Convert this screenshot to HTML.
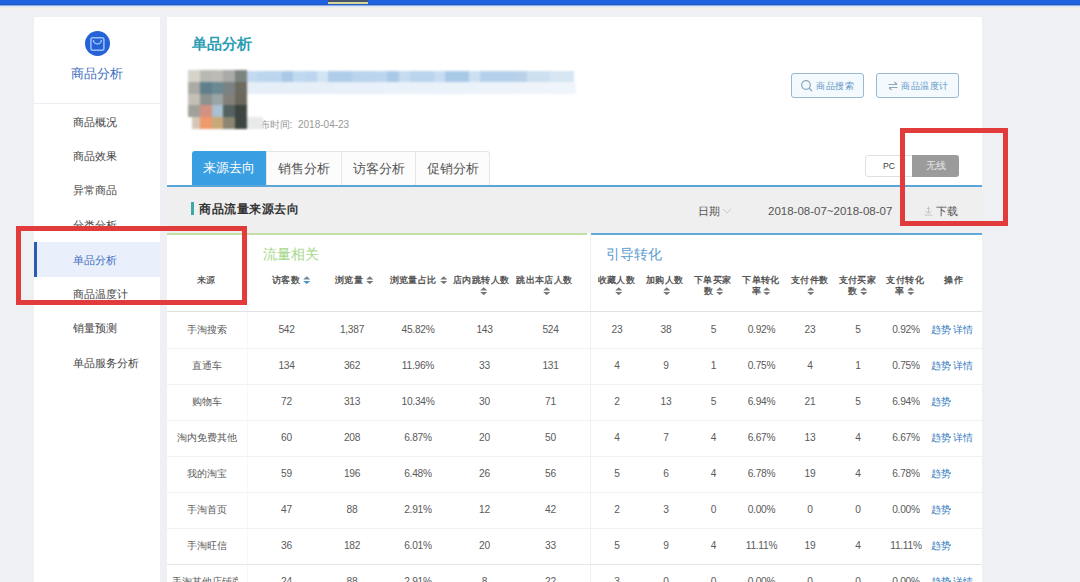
<!DOCTYPE html>
<html><head><meta charset="utf-8">
<style>
*{margin:0;padding:0;box-sizing:border-box}
html,body{width:1080px;height:582px;overflow:hidden;background:#eef0f4;font-family:"Liberation Sans",sans-serif;color:#333;position:relative}
.a{position:absolute;white-space:nowrap}
.sitem{left:73px;font-size:11px;line-height:16px}
.hd{font-size:9px;letter-spacing:0.4px;line-height:13px;color:#4a4a4a;-webkit-text-stroke:0.3px #4a4a4a}
.td{font-size:10px;line-height:13px;color:#5a5a5a}
.num{font-size:10.2px;letter-spacing:-0.25px;line-height:13px;color:#5a5a5a}
</style></head>
<body>
<div class="a" style="left:0;top:0;width:1080px;height:4px;background:#1e62df"></div>
<div class="a" style="left:0;top:4px;width:1080px;height:1px;background:#2359c6"></div>
<div class="a" style="left:0;top:5px;width:1080px;height:1px;background:#8eabe2"></div>
<div class="a" style="left:0;top:6px;width:1080px;height:1px;background:#dde8f8"></div>
<div class="a" style="left:0;top:7px;width:1080px;height:1px;background:#e8ecf0"></div>
<div class="a" style="left:0;top:8px;width:1080px;height:2px;background:#f4f0ec"></div>
<div class="a" style="left:328px;top:0;width:40px;height:2px;background:#46546e"></div>
<div class="a" style="left:328px;top:2px;width:40px;height:2px;background:#d8d694"></div>
<div class="a" style="left:34px;top:17px;width:126px;height:565px;background:#fff"></div>
<div class="a" style="left:167px;top:17px;width:815px;height:565px;background:#fff"></div>
<div class="a" style="left:85px;top:31px;width:25px;height:25px;border-radius:50%;background:#2462d5"></div>
<svg class="a" style="left:85px;top:31px" width="25" height="25" viewBox="0 0 25 25"><rect x="5.9" y="6.7" width="13" height="12.6" rx="2" fill="none" stroke="#9cc0fa" stroke-width="1.5"/><path d="M8.4 9 A4 4 0 0 0 16.4 9" fill="none" stroke="#9cc0fa" stroke-width="1.5"/></svg>
<div class="a" style="left:34px;top:66px;width:126px;text-align:center;font-size:13px;line-height:16px;color:#3d6ec2">商品分析</div>
<div class="a" style="left:34px;top:103px;width:126px;height:1px;background:#eceef3"></div>
<div class="a" style="left:34px;top:242px;width:126px;height:35px;background:#e9f0fb"></div>
<div class="a" style="left:34px;top:242px;width:3px;height:35px;background:#2a5bb5"></div>
<div class="a sitem" style="top:114px;color:#444">商品概况</div>
<div class="a sitem" style="top:148px;color:#444">商品效果</div>
<div class="a sitem" style="top:182px;color:#444">异常商品</div>
<div class="a sitem" style="top:217px;color:#444">分类分析</div>
<div class="a sitem" style="top:252px;color:#3d6ec2">单品分析</div>
<div class="a sitem" style="top:286px;color:#444">商品温度计</div>
<div class="a sitem" style="top:320px;color:#444">销量预测</div>
<div class="a sitem" style="top:355px;color:#444">单品服务分析</div>
<div class="a" style="left:191.5px;top:35px;font-size:15px;line-height:17px;font-weight:bold;color:#2b9db4">单品分析</div>
<div class="a" style="left:260px;top:119px;font-size:10px;line-height:12px;color:#999">布时间</div>
<div class="a" style="left:289.5px;top:119px;font-size:10px;line-height:12px;color:#999">:</div>
<div class="a" style="left:298px;top:119px;font-size:10px;line-height:12px;color:#999">2018-04-23</div>
<div class="a" style="left:0;top:0;width:1080px;height:140px;filter:blur(0.8px)">
<div class="a" style="left:188.30px;top:70.30px;width:12.08px;height:12.08px;background:#d6d3cb"></div>
<div class="a" style="left:199.98px;top:70.30px;width:12.08px;height:12.08px;background:#b9b9b3"></div>
<div class="a" style="left:211.66px;top:70.30px;width:12.08px;height:12.08px;background:#bdbbb5"></div>
<div class="a" style="left:223.34px;top:70.30px;width:12.08px;height:12.08px;background:#a9aba7"></div>
<div class="a" style="left:235.02px;top:70.30px;width:12.08px;height:12.08px;background:#7d837f"></div>
<div class="a" style="left:188.30px;top:81.98px;width:12.08px;height:12.08px;background:#abaaa4"></div>
<div class="a" style="left:199.98px;top:81.98px;width:12.08px;height:12.08px;background:#607e8b"></div>
<div class="a" style="left:211.66px;top:81.98px;width:12.08px;height:12.08px;background:#6b8995"></div>
<div class="a" style="left:223.34px;top:81.98px;width:12.08px;height:12.08px;background:#7b8284"></div>
<div class="a" style="left:235.02px;top:81.98px;width:12.08px;height:12.08px;background:#6d6a5f"></div>
<div class="a" style="left:188.30px;top:93.66px;width:12.08px;height:12.08px;background:#c4c0b6"></div>
<div class="a" style="left:199.98px;top:93.66px;width:12.08px;height:12.08px;background:#8b9391"></div>
<div class="a" style="left:211.66px;top:93.66px;width:12.08px;height:12.08px;background:#9ba5a5"></div>
<div class="a" style="left:223.34px;top:93.66px;width:12.08px;height:12.08px;background:#838079"></div>
<div class="a" style="left:235.02px;top:93.66px;width:12.08px;height:12.08px;background:#6b675b"></div>
<div class="a" style="left:188.30px;top:105.34px;width:12.08px;height:12.08px;background:#a1a19b"></div>
<div class="a" style="left:199.98px;top:105.34px;width:12.08px;height:12.08px;background:#d39182"></div>
<div class="a" style="left:211.66px;top:105.34px;width:12.08px;height:12.08px;background:#a9c1d1"></div>
<div class="a" style="left:223.34px;top:105.34px;width:12.08px;height:12.08px;background:#536161"></div>
<div class="a" style="left:235.02px;top:105.34px;width:12.08px;height:12.08px;background:#3d4541"></div>
<div class="a" style="left:188.30px;top:117.02px;width:12.08px;height:12.08px;background:#d4c6b4"></div>
<div class="a" style="left:199.98px;top:117.02px;width:12.08px;height:12.08px;background:#ef9a6b"></div>
<div class="a" style="left:211.66px;top:117.02px;width:12.08px;height:12.08px;background:#c9a97a"></div>
<div class="a" style="left:223.34px;top:117.02px;width:12.08px;height:12.08px;background:#8b8571"></div>
<div class="a" style="left:235.02px;top:117.02px;width:12.08px;height:12.08px;background:#3d4541"></div>
<div class="a" style="left:188px;top:117px;width:4px;height:12px;background:#fff"></div>
<div class="a" style="left:246.70px;top:70.5px;width:12.08px;height:11.6px;background:#c2d9ef"></div>
<div class="a" style="left:258.38px;top:70.5px;width:12.08px;height:11.6px;background:#bcd6ee"></div>
<div class="a" style="left:270.06px;top:70.5px;width:12.08px;height:11.6px;background:#bcd6ee"></div>
<div class="a" style="left:281.74px;top:70.5px;width:12.08px;height:11.6px;background:#a9c9e7"></div>
<div class="a" style="left:293.42px;top:70.5px;width:12.08px;height:11.6px;background:#c1d9f0"></div>
<div class="a" style="left:305.10px;top:70.5px;width:12.08px;height:11.6px;background:#bdd5ee"></div>
<div class="a" style="left:316.78px;top:70.5px;width:12.08px;height:11.6px;background:#d1e4f4"></div>
<div class="a" style="left:328.46px;top:70.5px;width:12.08px;height:11.6px;background:#afcce8"></div>
<div class="a" style="left:340.14px;top:70.5px;width:12.08px;height:11.6px;background:#afcce8"></div>
<div class="a" style="left:351.82px;top:70.5px;width:12.08px;height:11.6px;background:#b9d4ec"></div>
<div class="a" style="left:363.50px;top:70.5px;width:12.08px;height:11.6px;background:#b9d4ec"></div>
<div class="a" style="left:375.18px;top:70.5px;width:12.08px;height:11.6px;background:#bdd6ee"></div>
<div class="a" style="left:386.86px;top:70.5px;width:12.08px;height:11.6px;background:#a9c9e7"></div>
<div class="a" style="left:398.54px;top:70.5px;width:12.08px;height:11.6px;background:#c8dcf0"></div>
<div class="a" style="left:410.22px;top:70.5px;width:12.08px;height:11.6px;background:#b9d4ec"></div>
<div class="a" style="left:421.90px;top:70.5px;width:12.08px;height:11.6px;background:#b9d4ec"></div>
<div class="a" style="left:433.58px;top:70.5px;width:12.08px;height:11.6px;background:#c8dcf2"></div>
<div class="a" style="left:445.26px;top:70.5px;width:12.08px;height:11.6px;background:#a9c9e8"></div>
<div class="a" style="left:456.94px;top:70.5px;width:12.08px;height:11.6px;background:#a9c9e8"></div>
<div class="a" style="left:468.62px;top:70.5px;width:12.08px;height:11.6px;background:#cde0f2"></div>
<div class="a" style="left:480.30px;top:70.5px;width:12.08px;height:11.6px;background:#b5d0ea"></div>
<div class="a" style="left:491.98px;top:70.5px;width:12.08px;height:11.6px;background:#b5d0ea"></div>
<div class="a" style="left:503.66px;top:70.5px;width:12.08px;height:11.6px;background:#b5d0ea"></div>
<div class="a" style="left:515.34px;top:70.5px;width:12.08px;height:11.6px;background:#b9d2ea"></div>
<div class="a" style="left:527.02px;top:70.5px;width:12.08px;height:11.6px;background:#cde0f0"></div>
<div class="a" style="left:538.70px;top:70.5px;width:12.08px;height:11.6px;background:#cde0f0"></div>
<div class="a" style="left:550.38px;top:70.5px;width:12.08px;height:11.6px;background:#d6e6f3"></div>
<div class="a" style="left:562.06px;top:70.5px;width:12.08px;height:11.6px;background:#d6e6f3"></div>
<div class="a" style="left:246.7px;top:82px;width:329px;height:11.5px;background:linear-gradient(90deg,#e6eef8,#ebf2fa 60%,#f1f5fb)"></div>
<div class="a" style="left:246.7px;top:117px;width:16px;height:11.5px;background:#e9e9e9"></div>
</div>
<div class="a" style="left:791px;top:73px;width:73px;height:25px;border:1px solid #97b9d3;border-radius:3px;background:#f3f9fd"></div>
<svg class="a" style="left:800px;top:79px" width="14" height="14" viewBox="0 0 14 14"><circle cx="6" cy="6" r="4.3" fill="none" stroke="#8aa6bd" stroke-width="1.2"/><path d="M9.2 9.2 L12 12" stroke="#8aa6bd" stroke-width="1.4"/></svg>
<div class="a" style="left:816px;top:80px;font-size:9px;letter-spacing:0.5px;line-height:12px;color:#6096c8">商品搜索</div>
<div class="a" style="left:876px;top:73px;width:83px;height:25px;border:1px solid #97b9d3;border-radius:3px;background:#f3f9fd"></div>
<svg class="a" style="left:887px;top:80px" width="12" height="12" viewBox="0 0 12 12"><path d="M1.5 4.5 H10 M7.5 2 L10 4.5" fill="none" stroke="#8aa6bd" stroke-width="1.1"/><path d="M10.5 7.5 H2 M4.5 10 L2 7.5" fill="none" stroke="#8aa6bd" stroke-width="1.1"/></svg>
<div class="a" style="left:901px;top:80px;font-size:9px;letter-spacing:0.5px;line-height:12px;color:#6096c8">商品温度计</div>
<div class="a" style="left:192px;top:151px;width:74px;height:34px;background:#3a9ee2;border-radius:3px 0 0 0;color:#fff;font-size:13px;line-height:34px;text-align:center">来源去向</div>
<div class="a" style="left:266px;top:151px;width:76px;height:34px;background:#fcfcfc;border:1px solid #e6e6e6;border-bottom:none;border-radius:0;color:#555;font-size:13px;line-height:33px;text-align:center">销售分析</div>
<div class="a" style="left:341px;top:151px;width:75px;height:34px;background:#fcfcfc;border:1px solid #e6e6e6;border-bottom:none;border-radius:0;color:#555;font-size:13px;line-height:33px;text-align:center">访客分析</div>
<div class="a" style="left:415px;top:151px;width:75px;height:34px;background:#fcfcfc;border:1px solid #e6e6e6;border-bottom:none;border-radius:0 3px 0 0;color:#555;font-size:13px;line-height:33px;text-align:center">促销分析</div>
<div class="a" style="left:865px;top:155px;width:48px;height:22px;border:1px solid #e0e0e0;border-radius:3px 0 0 3px;background:#fff;font-size:8.7px;line-height:20px;text-align:center;color:#444">PC</div>
<div class="a" style="left:912px;top:155px;width:47px;height:22px;border-radius:0 3px 3px 0;background:#9b9b9b;font-size:10px;line-height:22px;text-align:center;color:#e8e8e8">无线</div>
<div class="a" style="left:167px;top:185px;width:815px;height:2px;background:#5ba6d8"></div>
<div class="a" style="left:167px;top:187px;width:815px;height:46px;background:#efefef"></div>
<div class="a" style="left:191px;top:202px;width:3px;height:13px;background:#3ba9aa"></div>
<div class="a" style="left:199px;top:201px;font-size:12px;letter-spacing:0.55px;line-height:16px;font-weight:bold;color:#333">商品流量来源去向</div>
<div class="a" style="left:698px;top:204px;font-size:11px;line-height:14px;color:#555">日期</div>
<svg class="a" style="left:722px;top:207px" width="10" height="8" viewBox="0 0 10 8"><path d="M1 2 L5 6 L9 2" fill="none" stroke="#c8c8c8" stroke-width="1"/></svg>
<div class="a" style="left:768px;top:204px;font-size:11.5px;line-height:14px;color:#555">2018-08-07~2018-08-07</div>
<svg class="a" style="left:923px;top:205px" width="11" height="11" viewBox="0 0 11 11"><path d="M5.5 1.5 V8 M2.5 6 Q5.5 9.5 8.5 6 M1.5 10 H9.5 M4 3.5 H7" fill="none" stroke="#c4c4c4" stroke-width="1"/></svg>
<div class="a" style="left:936px;top:204px;font-size:11px;line-height:14px;color:#555">下载</div>
<div class="a" style="left:167px;top:233px;width:420px;height:1.5px;background:#c2e0a6"></div>
<div class="a" style="left:591px;top:233px;width:391px;height:2px;background:#62a8d8"></div>
<div class="a" style="left:263px;top:246px;font-size:14px;line-height:17px;color:#a6d88a">流量相关</div>
<div class="a" style="left:606px;top:246px;font-size:14px;line-height:17px;color:#5a9dd0">引导转化</div>
<div class="a" style="left:247px;top:235px;width:1px;height:347px;background:#f8f8f8"></div>
<div class="a" style="left:590px;top:235px;width:1px;height:347px;background:#f0f0f0"></div>
<div class="a" style="left:196.5px;top:273.5px;font-size:9px;line-height:13px;letter-spacing:0.4px;color:#444;-webkit-text-stroke:0.15px #444">来源</div>
<div class="a hd" style="left:272.1px;top:273.5px">访客数</div>
<div class="a hd" style="left:335.1px;top:273.5px">浏览量</div>
<div class="a hd" style="left:389.6px;top:273.5px">浏览量占比</div>
<div class="a hd" style="left:453.1px;top:273.5px">店内跳转人数</div>
<div class="a hd" style="left:516.3px;top:273.5px">跳出本店人数</div>
<div class="a hd" style="left:597.7px;top:273.5px">收藏人数</div>
<div class="a hd" style="left:645.9px;top:273.5px">加购人数</div>
<div class="a hd" style="left:694.0px;top:273.5px">下单买家</div>
<div class="a hd" style="left:742.2px;top:273.5px">下单转化</div>
<div class="a hd" style="left:791.1px;top:273.5px">支付件数</div>
<div class="a hd" style="left:838.7px;top:273.5px">支付买家</div>
<div class="a hd" style="left:886.4px;top:273.5px">支付转化</div>
<div class="a hd" style="left:944.4px;top:273.5px">操作</div>
<div class="a hd" style="left:703.8px;top:284.5px">数</div>
<div class="a hd" style="left:751.6px;top:284.5px">率</div>
<div class="a hd" style="left:848.3px;top:284.5px">数</div>
<div class="a hd" style="left:895.0px;top:284.5px">率</div>
<svg class="a" style="left:303.05px;top:275.75px" width="7.5" height="8.5" viewBox="0 0 7.5 8.5"><path d="M3.75 0.3 L7.3 3.6 L0.2 3.6Z" fill="#6a8a9c"/><path d="M3.75 8.2 L7.3 4.9 L0.2 4.9Z" fill="#4a98c4"/></svg>
<svg class="a" style="left:366.25px;top:275.75px" width="7.5" height="8.5" viewBox="0 0 7.5 8.5"><path d="M3.75 0.3 L7.3 3.6 L0.2 3.6Z" fill="#777"/><path d="M3.75 8.2 L7.3 4.9 L0.2 4.9Z" fill="#777"/></svg>
<svg class="a" style="left:439.75px;top:275.75px" width="7.5" height="8.5" viewBox="0 0 7.5 8.5"><path d="M3.75 0.3 L7.3 3.6 L0.2 3.6Z" fill="#777"/><path d="M3.75 8.2 L7.3 4.9 L0.2 4.9Z" fill="#777"/></svg>
<svg class="a" style="left:479.75px;top:286.75px" width="7.5" height="8.5" viewBox="0 0 7.5 8.5"><path d="M3.75 0.3 L7.3 3.6 L0.2 3.6Z" fill="#777"/><path d="M3.75 8.2 L7.3 4.9 L0.2 4.9Z" fill="#777"/></svg>
<svg class="a" style="left:542.85px;top:286.75px" width="7.5" height="8.5" viewBox="0 0 7.5 8.5"><path d="M3.75 0.3 L7.3 3.6 L0.2 3.6Z" fill="#777"/><path d="M3.75 8.2 L7.3 4.9 L0.2 4.9Z" fill="#777"/></svg>
<svg class="a" style="left:614.95px;top:286.75px" width="7.5" height="8.5" viewBox="0 0 7.5 8.5"><path d="M3.75 0.3 L7.3 3.6 L0.2 3.6Z" fill="#777"/><path d="M3.75 8.2 L7.3 4.9 L0.2 4.9Z" fill="#777"/></svg>
<svg class="a" style="left:663.15px;top:286.75px" width="7.5" height="8.5" viewBox="0 0 7.5 8.5"><path d="M3.75 0.3 L7.3 3.6 L0.2 3.6Z" fill="#777"/><path d="M3.75 8.2 L7.3 4.9 L0.2 4.9Z" fill="#777"/></svg>
<svg class="a" style="left:715.55px;top:286.75px" width="7.5" height="8.5" viewBox="0 0 7.5 8.5"><path d="M3.75 0.3 L7.3 3.6 L0.2 3.6Z" fill="#777"/><path d="M3.75 8.2 L7.3 4.9 L0.2 4.9Z" fill="#777"/></svg>
<svg class="a" style="left:762.95px;top:286.75px" width="7.5" height="8.5" viewBox="0 0 7.5 8.5"><path d="M3.75 0.3 L7.3 3.6 L0.2 3.6Z" fill="#777"/><path d="M3.75 8.2 L7.3 4.9 L0.2 4.9Z" fill="#777"/></svg>
<svg class="a" style="left:807.25px;top:286.75px" width="7.5" height="8.5" viewBox="0 0 7.5 8.5"><path d="M3.75 0.3 L7.3 3.6 L0.2 3.6Z" fill="#777"/><path d="M3.75 8.2 L7.3 4.9 L0.2 4.9Z" fill="#777"/></svg>
<svg class="a" style="left:860.05px;top:286.75px" width="7.5" height="8.5" viewBox="0 0 7.5 8.5"><path d="M3.75 0.3 L7.3 3.6 L0.2 3.6Z" fill="#777"/><path d="M3.75 8.2 L7.3 4.9 L0.2 4.9Z" fill="#777"/></svg>
<svg class="a" style="left:907.25px;top:286.75px" width="7.5" height="8.5" viewBox="0 0 7.5 8.5"><path d="M3.75 0.3 L7.3 3.6 L0.2 3.6Z" fill="#777"/><path d="M3.75 8.2 L7.3 4.9 L0.2 4.9Z" fill="#777"/></svg>
<div class="a" style="left:167px;top:311px;width:815px;height:1px;background:#e2e2e2"></div>
<div class="a" style="left:167px;top:348px;width:815px;height:1px;background:#f1f1f1"></div>
<div class="a td" style="left:166.5px;top:323.2px;width:80px;text-align:center">手淘搜索</div>
<div class="a num" style="left:256.5px;top:323.2px;width:60px;text-align:center">542</div>
<div class="a num" style="left:322px;top:323.2px;width:60px;text-align:center">1,387</div>
<div class="a num" style="left:388px;top:323.2px;width:60px;text-align:center">45.82%</div>
<div class="a num" style="left:454.5px;top:323.2px;width:60px;text-align:center">143</div>
<div class="a num" style="left:520.5px;top:323.2px;width:60px;text-align:center">524</div>
<div class="a num" style="left:587px;top:323.2px;width:60px;text-align:center">23</div>
<div class="a num" style="left:636px;top:323.2px;width:60px;text-align:center">38</div>
<div class="a num" style="left:683.5px;top:323.2px;width:60px;text-align:center">5</div>
<div class="a num" style="left:731.5px;top:323.2px;width:60px;text-align:center">0.92%</div>
<div class="a num" style="left:780px;top:323.2px;width:60px;text-align:center">23</div>
<div class="a num" style="left:828px;top:323.2px;width:60px;text-align:center">5</div>
<div class="a num" style="left:876px;top:323.2px;width:60px;text-align:center">0.92%</div>
<div class="a td" style="left:930.5px;top:322.7px;color:#3278be">趋势<span style="display:inline-block;width:2px"></span>详情</div>
<div class="a" style="left:167px;top:384px;width:815px;height:1px;background:#f1f1f1"></div>
<div class="a td" style="left:166.5px;top:359.2px;width:80px;text-align:center">直通车</div>
<div class="a num" style="left:256.5px;top:359.2px;width:60px;text-align:center">134</div>
<div class="a num" style="left:322px;top:359.2px;width:60px;text-align:center">362</div>
<div class="a num" style="left:388px;top:359.2px;width:60px;text-align:center">11.96%</div>
<div class="a num" style="left:454.5px;top:359.2px;width:60px;text-align:center">33</div>
<div class="a num" style="left:520.5px;top:359.2px;width:60px;text-align:center">131</div>
<div class="a num" style="left:587px;top:359.2px;width:60px;text-align:center">4</div>
<div class="a num" style="left:636px;top:359.2px;width:60px;text-align:center">9</div>
<div class="a num" style="left:683.5px;top:359.2px;width:60px;text-align:center">1</div>
<div class="a num" style="left:731.5px;top:359.2px;width:60px;text-align:center">0.75%</div>
<div class="a num" style="left:780px;top:359.2px;width:60px;text-align:center">4</div>
<div class="a num" style="left:828px;top:359.2px;width:60px;text-align:center">1</div>
<div class="a num" style="left:876px;top:359.2px;width:60px;text-align:center">0.75%</div>
<div class="a td" style="left:930.5px;top:358.7px;color:#3278be">趋势<span style="display:inline-block;width:2px"></span>详情</div>
<div class="a" style="left:167px;top:420px;width:815px;height:1px;background:#f1f1f1"></div>
<div class="a td" style="left:166.5px;top:395.2px;width:80px;text-align:center">购物车</div>
<div class="a num" style="left:256.5px;top:395.2px;width:60px;text-align:center">72</div>
<div class="a num" style="left:322px;top:395.2px;width:60px;text-align:center">313</div>
<div class="a num" style="left:388px;top:395.2px;width:60px;text-align:center">10.34%</div>
<div class="a num" style="left:454.5px;top:395.2px;width:60px;text-align:center">30</div>
<div class="a num" style="left:520.5px;top:395.2px;width:60px;text-align:center">71</div>
<div class="a num" style="left:587px;top:395.2px;width:60px;text-align:center">2</div>
<div class="a num" style="left:636px;top:395.2px;width:60px;text-align:center">13</div>
<div class="a num" style="left:683.5px;top:395.2px;width:60px;text-align:center">5</div>
<div class="a num" style="left:731.5px;top:395.2px;width:60px;text-align:center">6.94%</div>
<div class="a num" style="left:780px;top:395.2px;width:60px;text-align:center">21</div>
<div class="a num" style="left:828px;top:395.2px;width:60px;text-align:center">5</div>
<div class="a num" style="left:876px;top:395.2px;width:60px;text-align:center">6.94%</div>
<div class="a td" style="left:930.5px;top:394.7px;color:#3278be">趋势</div>
<div class="a" style="left:167px;top:456px;width:815px;height:1px;background:#f1f1f1"></div>
<div class="a td" style="left:166.5px;top:431.2px;width:80px;text-align:center">淘内免费其他</div>
<div class="a num" style="left:256.5px;top:431.2px;width:60px;text-align:center">60</div>
<div class="a num" style="left:322px;top:431.2px;width:60px;text-align:center">208</div>
<div class="a num" style="left:388px;top:431.2px;width:60px;text-align:center">6.87%</div>
<div class="a num" style="left:454.5px;top:431.2px;width:60px;text-align:center">20</div>
<div class="a num" style="left:520.5px;top:431.2px;width:60px;text-align:center">50</div>
<div class="a num" style="left:587px;top:431.2px;width:60px;text-align:center">4</div>
<div class="a num" style="left:636px;top:431.2px;width:60px;text-align:center">7</div>
<div class="a num" style="left:683.5px;top:431.2px;width:60px;text-align:center">4</div>
<div class="a num" style="left:731.5px;top:431.2px;width:60px;text-align:center">6.67%</div>
<div class="a num" style="left:780px;top:431.2px;width:60px;text-align:center">13</div>
<div class="a num" style="left:828px;top:431.2px;width:60px;text-align:center">4</div>
<div class="a num" style="left:876px;top:431.2px;width:60px;text-align:center">6.67%</div>
<div class="a td" style="left:930.5px;top:430.7px;color:#3278be">趋势<span style="display:inline-block;width:2px"></span>详情</div>
<div class="a" style="left:167px;top:492px;width:815px;height:1px;background:#f1f1f1"></div>
<div class="a td" style="left:166.5px;top:467.2px;width:80px;text-align:center">我的淘宝</div>
<div class="a num" style="left:256.5px;top:467.2px;width:60px;text-align:center">59</div>
<div class="a num" style="left:322px;top:467.2px;width:60px;text-align:center">196</div>
<div class="a num" style="left:388px;top:467.2px;width:60px;text-align:center">6.48%</div>
<div class="a num" style="left:454.5px;top:467.2px;width:60px;text-align:center">26</div>
<div class="a num" style="left:520.5px;top:467.2px;width:60px;text-align:center">56</div>
<div class="a num" style="left:587px;top:467.2px;width:60px;text-align:center">5</div>
<div class="a num" style="left:636px;top:467.2px;width:60px;text-align:center">6</div>
<div class="a num" style="left:683.5px;top:467.2px;width:60px;text-align:center">4</div>
<div class="a num" style="left:731.5px;top:467.2px;width:60px;text-align:center">6.78%</div>
<div class="a num" style="left:780px;top:467.2px;width:60px;text-align:center">19</div>
<div class="a num" style="left:828px;top:467.2px;width:60px;text-align:center">4</div>
<div class="a num" style="left:876px;top:467.2px;width:60px;text-align:center">6.78%</div>
<div class="a td" style="left:930.5px;top:466.7px;color:#3278be">趋势</div>
<div class="a" style="left:167px;top:528px;width:815px;height:1px;background:#f1f1f1"></div>
<div class="a td" style="left:166.5px;top:503.2px;width:80px;text-align:center">手淘首页</div>
<div class="a num" style="left:256.5px;top:503.2px;width:60px;text-align:center">47</div>
<div class="a num" style="left:322px;top:503.2px;width:60px;text-align:center">88</div>
<div class="a num" style="left:388px;top:503.2px;width:60px;text-align:center">2.91%</div>
<div class="a num" style="left:454.5px;top:503.2px;width:60px;text-align:center">12</div>
<div class="a num" style="left:520.5px;top:503.2px;width:60px;text-align:center">42</div>
<div class="a num" style="left:587px;top:503.2px;width:60px;text-align:center">2</div>
<div class="a num" style="left:636px;top:503.2px;width:60px;text-align:center">3</div>
<div class="a num" style="left:683.5px;top:503.2px;width:60px;text-align:center">0</div>
<div class="a num" style="left:731.5px;top:503.2px;width:60px;text-align:center">0.00%</div>
<div class="a num" style="left:780px;top:503.2px;width:60px;text-align:center">0</div>
<div class="a num" style="left:828px;top:503.2px;width:60px;text-align:center">0</div>
<div class="a num" style="left:876px;top:503.2px;width:60px;text-align:center">0.00%</div>
<div class="a td" style="left:930.5px;top:502.7px;color:#3278be">趋势</div>
<div class="a" style="left:167px;top:564px;width:815px;height:1px;background:#e6e6e6"></div>
<div class="a td" style="left:166.5px;top:539.2px;width:80px;text-align:center">手淘旺信</div>
<div class="a num" style="left:256.5px;top:539.2px;width:60px;text-align:center">36</div>
<div class="a num" style="left:322px;top:539.2px;width:60px;text-align:center">182</div>
<div class="a num" style="left:388px;top:539.2px;width:60px;text-align:center">6.01%</div>
<div class="a num" style="left:454.5px;top:539.2px;width:60px;text-align:center">20</div>
<div class="a num" style="left:520.5px;top:539.2px;width:60px;text-align:center">33</div>
<div class="a num" style="left:587px;top:539.2px;width:60px;text-align:center">5</div>
<div class="a num" style="left:636px;top:539.2px;width:60px;text-align:center">9</div>
<div class="a num" style="left:683.5px;top:539.2px;width:60px;text-align:center">4</div>
<div class="a num" style="left:731.5px;top:539.2px;width:60px;text-align:center">11.11%</div>
<div class="a num" style="left:780px;top:539.2px;width:60px;text-align:center">19</div>
<div class="a num" style="left:828px;top:539.2px;width:60px;text-align:center">4</div>
<div class="a num" style="left:876px;top:539.2px;width:60px;text-align:center">11.11%</div>
<div class="a td" style="left:930.5px;top:538.7px;color:#3278be">趋势</div>
<div class="a td" style="left:171.5px;top:575.2px;width:66px;overflow:hidden">手淘其他店铺商品</div>
<div class="a num" style="left:256.5px;top:575.2px;width:60px;text-align:center">24</div>
<div class="a num" style="left:322px;top:575.2px;width:60px;text-align:center">88</div>
<div class="a num" style="left:388px;top:575.2px;width:60px;text-align:center">2.91%</div>
<div class="a num" style="left:454.5px;top:575.2px;width:60px;text-align:center">8</div>
<div class="a num" style="left:520.5px;top:575.2px;width:60px;text-align:center">22</div>
<div class="a num" style="left:587px;top:575.2px;width:60px;text-align:center">3</div>
<div class="a num" style="left:636px;top:575.2px;width:60px;text-align:center">0</div>
<div class="a num" style="left:683.5px;top:575.2px;width:60px;text-align:center">0</div>
<div class="a num" style="left:731.5px;top:575.2px;width:60px;text-align:center">0.00%</div>
<div class="a num" style="left:780px;top:575.2px;width:60px;text-align:center">0</div>
<div class="a num" style="left:828px;top:575.2px;width:60px;text-align:center">0</div>
<div class="a num" style="left:876px;top:575.2px;width:60px;text-align:center">0.00%</div>
<div class="a td" style="left:930.5px;top:574.7px;color:#3278be">趋势<span style="display:inline-block;width:2px"></span>详情</div>
<div class="a" style="left:16px;top:226px;width:231px;height:79px;border:5px solid #e23b3c"></div>
<div class="a" style="left:900px;top:128px;width:108px;height:98px;border:5px solid #e23b3c"></div>
</body></html>
